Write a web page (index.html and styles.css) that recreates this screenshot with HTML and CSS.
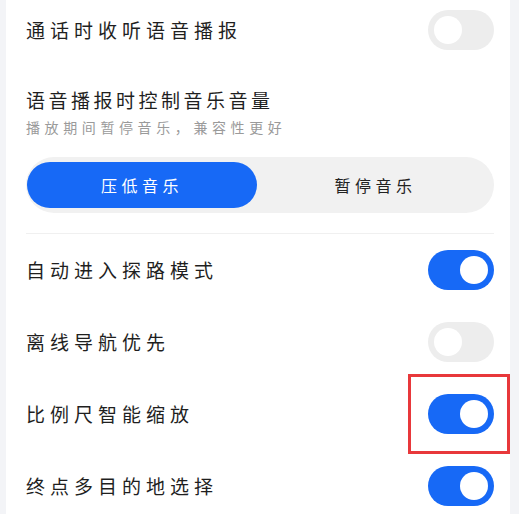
FILE: index.html
```html
<!DOCTYPE html>
<html lang="zh">
<head>
<meta charset="utf-8">
<link rel="stylesheet" href="styles.css">
</head>
<body>
<div class="card">
  <div class="row row-first">
    <span class="label">通话时收听语音播报</span>
    <span class="toggle off"><span class="knob"></span></span>
  </div>
  <div class="section">
    <div class="title">语音播报时控制音乐音量</div>
    <div class="sub">播放期间暂停音乐，兼容性更好</div>
    <div class="segment">
      <div class="seg active">压低音乐</div>
      <div class="seg">暂停音乐</div>
    </div>
  </div>
  <div class="row">
    <span class="label">自动进入探路模式</span>
    <span class="toggle on"><span class="knob"></span></span>
  </div>
  <div class="row">
    <span class="label">离线导航优先</span>
    <span class="toggle off"><span class="knob"></span></span>
  </div>
  <div class="row">
    <span class="label">比例尺智能缩放</span>
    <span class="toggle-wrap">
      <span class="toggle on"><span class="knob"></span></span>
      <span class="highlight"></span>
    </span>
  </div>
  <div class="row">
    <span class="label">终点多目的地选择</span>
    <span class="toggle on"><span class="knob"></span></span>
  </div>
</div>
</body>
</html>
```

FILE: styles.css
```css
html, body {
  margin: 0;
  padding: 0;
  background: #f3f4f7;
  font-family: "Noto Sans CJK SC", "Noto Sans", sans-serif;
  color: #1f1f1f;
  overflow: hidden;
}
.card {
  margin: 0 9px 0 6px;
  background: #ffffff;
  padding: 0 16px 0 20px;
  height: 540px;
}
.row {
  height: 72px;
  display: flex;
  align-items: center;
  justify-content: space-between;
}
.row-first {
  height: 60px;
}
.label {
  font-size: 19px;
  letter-spacing: 5px;
  line-height: 26px;
}
.section {
  padding: 27px 0 20px 0;
  border-bottom: 1px solid #f0f0f0;
}
.title {
  font-size: 19px;
  letter-spacing: 3.5px;
  line-height: 26px;
}
.sub {
  font-size: 14px;
  letter-spacing: 4.6px;
  line-height: 20px;
  margin-top: 4px;
  color: #9a9a9a;
}
.segment {
  margin-top: 20px;
  height: 56px;
  box-sizing: border-box;
  padding: 5px 0 5px 1px;
  background: #f1f1f1;
  border-radius: 28px;
  display: flex;
}
.seg {
  flex: 1;
  display: flex;
  align-items: center;
  justify-content: center;
  font-size: 16px;
  letter-spacing: 4.5px;
  color: #222;
  border-radius: 23px;
}
.seg.active {
  flex: 0 0 230px;
  background: #1769f6;
  color: #ffffff;
}
.toggle {
  width: 66px;
  height: 40px;
  border-radius: 20px;
  box-sizing: border-box;
  padding: 6px;
  display: flex;
  align-items: center;
}
.toggle.on {
  background: #1769f6;
  justify-content: flex-end;
}
.toggle.off {
  background: #ededed;
  justify-content: flex-start;
}
.knob {
  width: 28px;
  height: 28px;
  border-radius: 50%;
  background: #ffffff;
}
.toggle-wrap {
  position: relative;
  display: flex;
}
.highlight {
  position: absolute;
  left: -20px;
  right: -16px;
  top: -20px;
  bottom: -20px;
  border: 3px solid #e8383b;
  box-sizing: border-box;
}
```
